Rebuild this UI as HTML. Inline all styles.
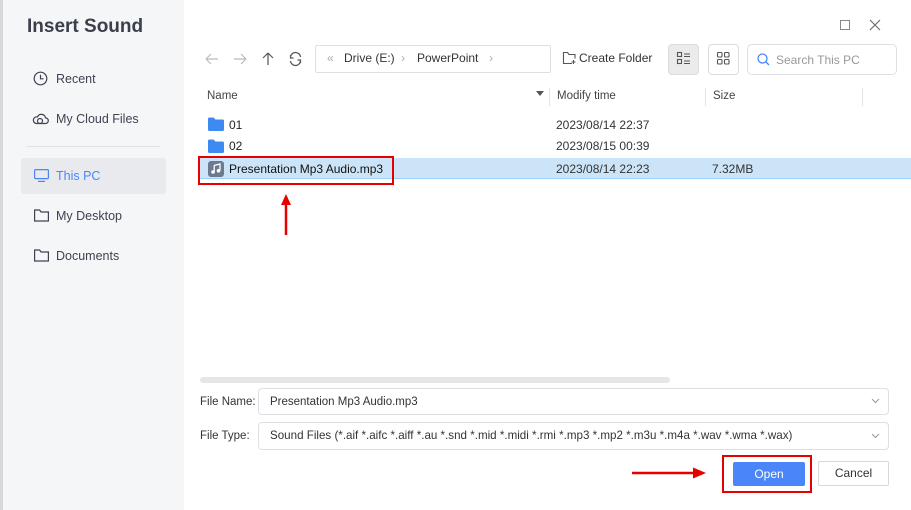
<!DOCTYPE html>
<html><head><meta charset="utf-8"><style>
*{box-sizing:border-box;margin:0;padding:0}
body{width:911px;height:510px;overflow:hidden;background:#fff;font-family:"Liberation Sans",sans-serif;font-size:12px;color:#333;position:relative}
.a{position:absolute}
.sb{left:0;top:0;width:184px;height:510px;background:#f5f6f8;border-left:3px solid #d8d8d8}
.t{white-space:nowrap}
.nav{color:#3d4350;font-size:12.5px}
svg{position:absolute;overflow:visible}
.box{border:1px solid #dcdfe4;border-radius:4px;background:#fff}
.sel{border:1px solid #d9dce1;border-radius:4px;background:#fff}
</style></head><body>
<div class="a sb"></div>
<div class="a t" style="left:27px;top:16px;font-size:19px;font-weight:bold;color:#3a3f4b">Insert Sound</div>
<svg style="left:33px;top:71px" width="15" height="15" viewBox="0 0 15 15" fill="none" stroke="#3d4350" stroke-width="1.2"><circle cx="7.5" cy="7.5" r="6.3"/><path d="M7.5 3.8v4h3"/></svg>
<div class="a t nav" style="left:56px;top:72px">Recent</div>
<svg style="left:32px;top:112px" width="17" height="13" viewBox="0 0 17 13" fill="none" stroke="#3d4350" stroke-width="1.2"><path d="M4 11.5h9.5a2.8 2.8 0 0 0 0-5.6 4.2 4.2 0 0 0-8-1A3.3 3.3 0 0 0 4 11.5z"/><circle cx="8" cy="9" r="2.5"/></svg>
<div class="a t nav" style="left:56px;top:112px">My Cloud Files</div>
<div class="a" style="left:27px;top:146px;width:133px;height:1px;background:#dfe1e5"></div>
<div class="a" style="left:21px;top:158px;width:145px;height:36px;background:#e8eaee;border-radius:3px"></div>
<svg style="left:34px;top:169px" width="15" height="13" viewBox="0 0 15 13" fill="none" stroke="#4a86f7" stroke-width="1.2"><rect x="0.6" y="0.6" width="13.8" height="9" rx="1"/><path d="M4 12.4h7"/></svg>
<div class="a t nav" style="left:56px;top:169px;color:#4a86f7">This PC</div>
<svg style="left:34px;top:209px" width="15" height="13" viewBox="0 0 15 13" fill="none" stroke="#3d4350" stroke-width="1.2"><path d="M0.6 1h5l1.5 2h7.3v9H0.6z"/></svg>
<div class="a t nav" style="left:56px;top:209px">My Desktop</div>
<svg style="left:34px;top:249px" width="15" height="13" viewBox="0 0 15 13" fill="none" stroke="#3d4350" stroke-width="1.2"><path d="M0.6 1h5l1.5 2h7.3v9H0.6z"/></svg>
<div class="a t nav" style="left:56px;top:249px">Documents</div>

<svg style="left:840px;top:20px" width="10" height="10"><rect x="0.5" y="0.5" width="9" height="9" fill="none" stroke="#888"/></svg>
<svg style="left:870px;top:20px" width="10" height="10"><path d="M0 0L10 10M10 0L0 10" stroke="#666" stroke-width="1.1"/></svg>

<svg style="left:205px;top:52px" width="105" height="14" fill="none" stroke-width="1.2"><path d="M1 7h12M1 7l5-5M1 7l5 5" stroke="#bbb"/><path d="M29 7h12M41 7l-5-5M41 7l-5 5" stroke="#bbb"/><path d="M63 1v12M63 1l-5 5M63 1l5 5" stroke="#555"/><path d="M95.5 5A5 5 0 0 0 85.5 6M85.5 9A5 5 0 0 0 95.5 8M85.5 3v3h3M95.5 11V8h-3" stroke="#555"/></svg>
<div class="a box" style="left:315px;top:45px;width:236px;height:28px;border-radius:2px"></div>
<div class="a t" style="left:327px;top:51px;color:#aaa;font-size:12px">«</div>
<div class="a t" style="left:344px;top:51px;color:#333">Drive (E:)</div>
<div class="a t" style="left:401px;top:51px;color:#aaa">›</div>
<div class="a t" style="left:417px;top:51px;color:#333">PowerPoint</div>
<div class="a t" style="left:489px;top:51px;color:#aaa">›</div>
<svg style="left:563px;top:52px" width="13" height="12" fill="none" stroke="#555" stroke-width="1.1"><path d="M9 11.5H0.5v-11h4l1.5 2h6v4"/><path d="M10.5 8v4M8.5 10h4"/></svg>
<div class="a t" style="left:579px;top:51px;color:#333">Create Folder</div>
<div class="a sel" style="left:668px;top:44px;width:31px;height:31px;background:#ebebeb"></div>
<svg style="left:677px;top:52px" width="13" height="13" fill="none" stroke="#555" stroke-width="1.1"><rect x="0.5" y="0.5" width="4" height="4"/><rect x="0.5" y="7.5" width="4" height="4"/><path d="M7 2h6M7 9h6M7 11.5h6M7 4.5h6"/></svg>
<div class="a sel" style="left:708px;top:44px;width:31px;height:31px"></div>
<svg style="left:717px;top:52px" width="13" height="13" fill="none" stroke="#555" stroke-width="1.1"><rect x="0.5" y="0.5" width="4.5" height="4.5" rx="1"/><rect x="7.5" y="0.5" width="4.5" height="4.5" rx="1"/><rect x="0.5" y="7.5" width="4.5" height="4.5" rx="1"/><rect x="7.5" y="7.5" width="4.5" height="4.5" rx="1"/></svg>
<div class="a box" style="left:747px;top:44px;width:150px;height:31px;border-radius:5px"></div>
<svg style="left:757px;top:53px" width="13" height="13" fill="none" stroke="#4a86f7" stroke-width="1.3"><circle cx="5.5" cy="5.5" r="4.5"/><path d="M9 9l3 3"/></svg>
<div class="a t" style="left:776px;top:53px;color:#999;font-size:12px">Search This PC</div>

<div class="a t" style="left:207px;top:90px;color:#444;font-size:11.5px">Name</div>
<svg style="left:536px;top:91px" width="8" height="5"><path d="M0 0h8L4 5z" fill="#555"/></svg>
<div class="a" style="left:549px;top:88px;width:1px;height:18px;background:#e3e3e3"></div>
<div class="a t" style="left:557px;top:90px;color:#444;font-size:11.5px">Modify time</div>
<div class="a" style="left:705px;top:88px;width:1px;height:18px;background:#e3e3e3"></div>
<div class="a t" style="left:713px;top:90px;color:#444;font-size:11.5px">Size</div>
<div class="a" style="left:862px;top:88px;width:1px;height:18px;background:#e3e3e3"></div>

<svg style="left:208px;top:117px" width="16" height="14"><path d="M0 2a1.5 1.5 0 0 1 1.5-1.5h4l2 2h7A1.5 1.5 0 0 1 16 4v8.5a1.5 1.5 0 0 1-1.5 1.5h-13A1.5 1.5 0 0 1 0 12.5z" fill="#3d8bf2"/></svg>
<div class="a t" style="left:229px;top:118px;color:#222">01</div>
<div class="a t" style="left:556px;top:118px;color:#333">2023/08/14 22:37</div>
<svg style="left:208px;top:139px" width="16" height="14"><path d="M0 2a1.5 1.5 0 0 1 1.5-1.5h4l2 2h7A1.5 1.5 0 0 1 16 4v8.5a1.5 1.5 0 0 1-1.5 1.5h-13A1.5 1.5 0 0 1 0 12.5z" fill="#3d8bf2"/></svg>
<div class="a t" style="left:229px;top:139px;color:#222">02</div>
<div class="a t" style="left:556px;top:139px;color:#333">2023/08/15 00:39</div>

<div class="a" style="left:200px;top:158px;width:711px;height:21px;background:#cce4f7;border-bottom:1px solid #9fd0f5"></div>
<div class="a" style="left:198px;top:156px;width:196px;height:29px;border:2.5px solid #e60000"></div>
<div class="a" style="left:208px;top:161px;width:16px;height:16px;background:#6b7a90;border-radius:3px"></div>
<svg style="left:211px;top:164px" width="10" height="10" fill="#fff"><path d="M3 1.5l6-1.5v6.5" stroke="#fff" stroke-width="1.3" fill="none"/><circle cx="2" cy="8" r="1.8"/><circle cx="7.5" cy="6.8" r="1.8"/><path d="M3.2 8V1.5" stroke="#fff" stroke-width="1.3"/></svg>
<div class="a t" style="left:229px;top:162px;color:#111">Presentation Mp3 Audio.mp3</div>
<div class="a t" style="left:556px;top:162px;color:#333">2023/08/14 22:23</div>
<div class="a t" style="left:712px;top:162px;color:#333">7.32MB</div>

<svg style="left:280px;top:194px" width="12" height="42"><path d="M6 41V10" stroke="#e60000" stroke-width="2.5"/><path d="M6 0L11 11H1z" fill="#e60000"/></svg>

<div class="a" style="left:200px;top:377px;width:470px;height:6px;background:#e6e6e6;border-radius:3px"></div>
<div class="a t" style="left:200px;top:396px;color:#333;font-size:11.5px">File Name:</div>
<div class="a box" style="left:258px;top:388px;width:631px;height:27px"></div>
<div class="a t" style="left:270px;top:396px;color:#333;font-size:11.5px">Presentation Mp3 Audio.mp3</div>
<svg style="left:872px;top:399px" width="7" height="4" fill="none" stroke="#999"><path d="M0 0l3.5 3.5L7 0"/></svg>
<div class="a t" style="left:200px;top:430px;color:#333;font-size:11.5px">File Type:</div>
<div class="a box" style="left:258px;top:422px;width:631px;height:28px"></div>
<div class="a t" style="left:270px;top:429px;color:#333;font-size:11.6px">Sound Files (*.aif *.aifc *.aiff *.au *.snd *.mid *.midi *.rmi *.mp3 *.mp2 *.m3u *.m4a *.wav *.wma *.wax)</div>
<svg style="left:872px;top:434px" width="7" height="4" fill="none" stroke="#999"><path d="M0 0l3.5 3.5L7 0"/></svg>

<svg style="left:632px;top:467px" width="74" height="12"><path d="M0 6H62" stroke="#e60000" stroke-width="2.5"/><path d="M74 6L61 0.5v11z" fill="#e60000"/></svg>
<div class="a" style="left:722px;top:455px;width:90px;height:38px;border:2.5px solid #e60000"></div>
<div class="a" style="left:733px;top:462px;width:72px;height:24px;background:#4a86f7;border-radius:2px;color:#fff;text-align:center;line-height:24px">Open</div>
<div class="a" style="left:818px;top:461px;width:71px;height:25px;border:1px solid #d5d8dd;border-radius:2px;color:#333;text-align:center;line-height:23px">Cancel</div>
</body></html>
